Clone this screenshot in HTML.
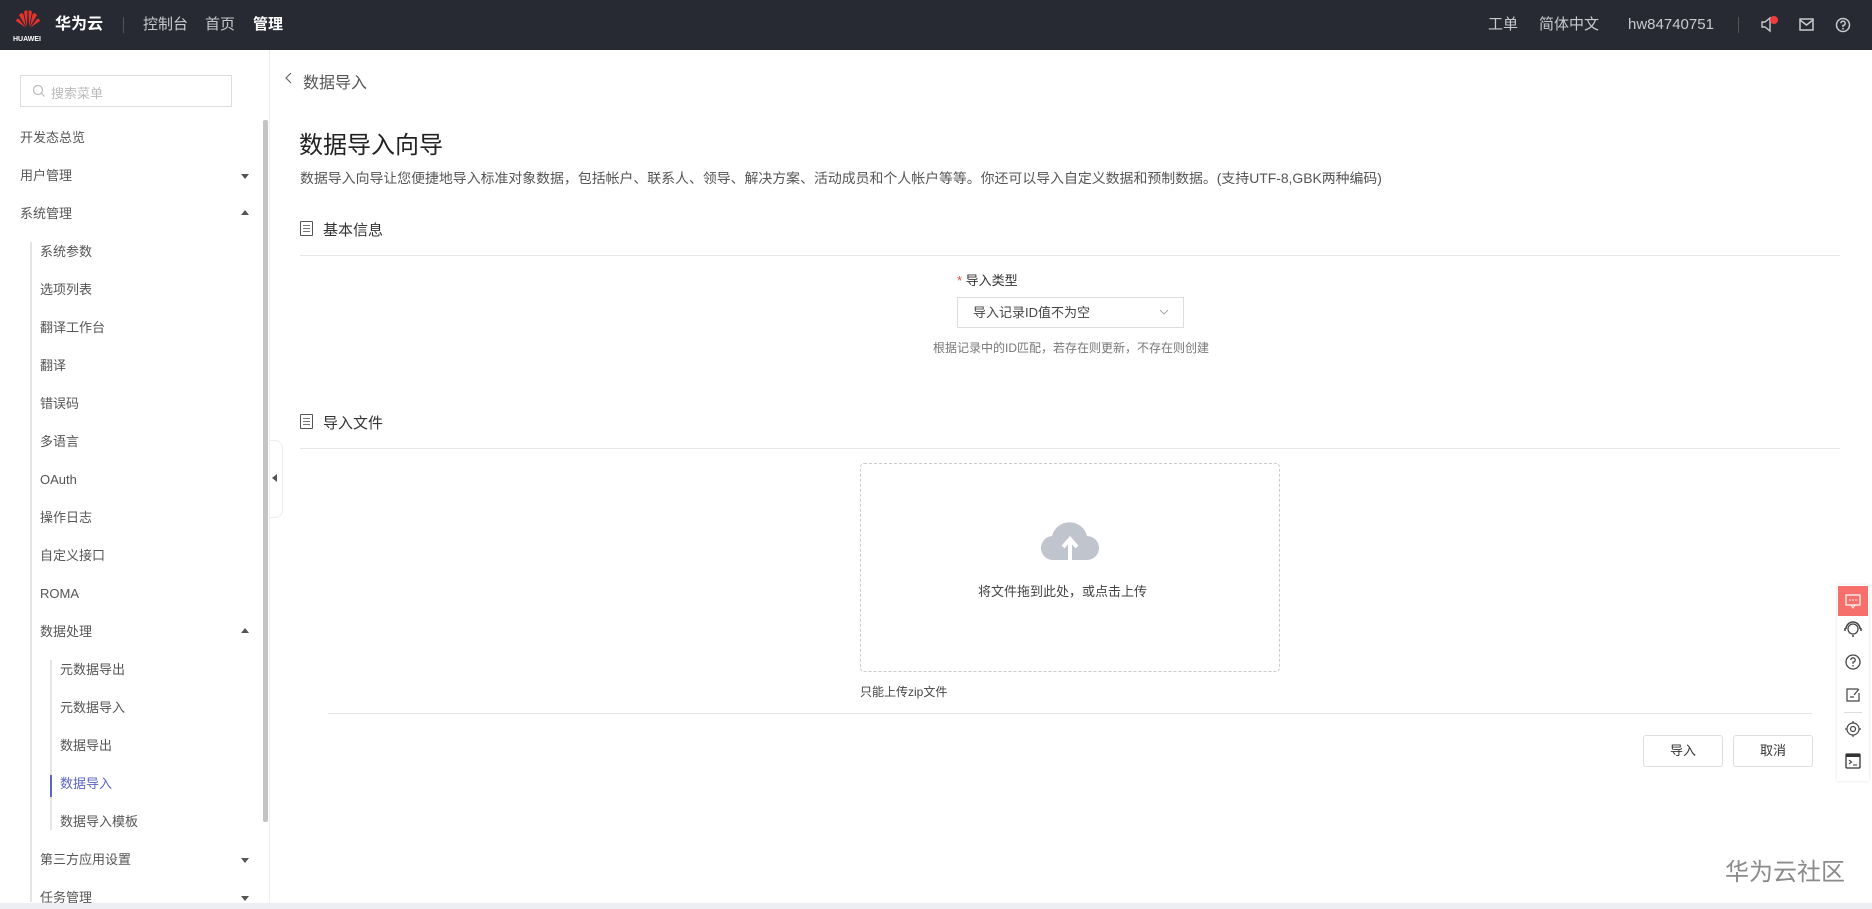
<!DOCTYPE html>
<html><head><meta charset="utf-8">
<style>
*{margin:0;padding:0;box-sizing:border-box}
body{width:1872px;height:909px;overflow:hidden;background:#fff;font-family:"Liberation Sans","Noto Sans CJK SC",sans-serif;color:#333;position:relative}
.hd{position:absolute;left:0;top:0;width:1872px;height:50px;background:#272a33;color:#c8cad0;font-size:15px}
.hd span{position:absolute;top:15px;line-height:20px}
.sb{position:absolute;left:0;top:50px;width:270px;height:853px;border-right:1px solid #eee}
.s{position:absolute;font-size:13px;color:#555;line-height:18px}
.tri{position:absolute;left:241px;width:0;height:0;border-left:4px solid transparent;border-right:4px solid transparent}
.dn{border-top:5px solid #555}.up{border-bottom:5px solid #555}
.m{position:absolute}
.ln{position:absolute;height:1px;background:#e6e6e6}
.ic{position:absolute;width:13px;height:15px;border:1px solid #555;border-radius:1px}
.ic i{position:absolute;left:2px;width:7px;height:1px;background:#777}
.btn{position:absolute;top:735px;width:80px;height:32px;border:1px solid #ddd;border-radius:3px;font-size:13px;text-align:center;line-height:30px;color:#333}
.fb{position:absolute;left:1838px;width:30px;height:30px}
</style></head><body>
<div class="hd">
  <svg style="position:absolute;left:15px;top:9px" width="26" height="20" viewBox="0 0 26 20">
    <g fill="#e8302c"><path d="M12 18 L9 3 Q11 0 12.5 2Z"/><path d="M14 18 L17 3 Q15 0 13.5 2Z"/><path d="M11 18 L4 6 Q6 3 8.5 5Z"/><path d="M15 18 L22 6 Q20 3 17.5 5Z"/><path d="M10.5 18.5 L1 12 Q1.5 9 4 10Z"/><path d="M15.5 18.5 L25 12 Q24.5 9 22 10Z"/></g>
  </svg>
  <span style="left:13px;top:30px;font-size:7px;color:#fff;font-weight:bold">HUAWEI</span>
  <span style="left:55px;color:#fff;font-weight:bold;font-size:16px">华为云</span>
  <div style="position:absolute;left:123px;top:17px;width:1px;height:16px;background:#555"></div>
  <span style="left:143px">控制台</span>
  <span style="left:205px">首页</span>
  <span style="left:253px;color:#fff;font-weight:bold">管理</span>
  <span style="left:1488px">工单</span>
  <span style="left:1539px">简体中文</span>
  <span style="left:1628px">hw84740751</span>
  <div style="position:absolute;left:1738px;top:17px;width:1px;height:16px;background:#555"></div>
  <svg style="position:absolute;left:1760px;top:16px" width="22" height="18" viewBox="0 0 22 18"><path d="M2 6h3l5-4v13l-5-4H2z" fill="none" stroke="#c8cad0" stroke-width="1.4"/><circle cx="14" cy="4" r="4" fill="#f03c3c"/></svg>
  <svg style="position:absolute;left:1799px;top:18px" width="15" height="13" viewBox="0 0 15 13"><rect x="1" y="1" width="13" height="11" fill="none" stroke="#c8cad0" stroke-width="1.5"/><path d="M1 2l6.5 5L14 2" fill="none" stroke="#c8cad0" stroke-width="1.5"/></svg>
  <svg style="position:absolute;left:1835px;top:17px" width="16" height="16" viewBox="0 0 16 16"><circle cx="8" cy="8" r="6.5" fill="none" stroke="#c8cad0" stroke-width="1.5"/><path d="M5.8 6.3a2.2 2.2 0 1 1 2.2 2.2v1.5" fill="none" stroke="#c8cad0" stroke-width="1.5"/><circle cx="8" cy="11.8" r=".9" fill="#c8cad0"/></svg>
</div>

<div class="sb">
  <div style="position:absolute;left:20px;top:25px;width:212px;height:32px;border:1px solid #ddd">
    <svg style="position:absolute;left:11px;top:8px" width="14" height="14" viewBox="0 0 14 14"><circle cx="6" cy="6" r="4.5" fill="none" stroke="#bbb" stroke-width="1.2"/><path d="M9.5 9.5l3 3" stroke="#bbb" stroke-width="1.2"/></svg>
    <span style="position:absolute;left:30px;top:7px;font-size:13px;color:#bbb">搜索菜单</span>
  </div>
  <div style="position:absolute;left:263px;top:70px;width:5px;height:702px;background:#c4c4c4;border-radius:2px"></div>
  <div style="position:absolute;left:30px;top:192px;width:2px;height:660px;background:#e5e5e5"></div>
  <div style="position:absolute;left:50px;top:610px;width:2px;height:170px;background:#e5e5e5"></div>
  <div style="position:absolute;left:50px;top:725px;width:2px;height:22px;background:#5c64c4"></div>
  <div class="s" style="left:20px;top:79px">开发态总览</div>
  <div class="s" style="left:20px;top:117px">用户管理</div><div class="tri dn" style="top:124px"></div>
  <div class="s" style="left:20px;top:155px">系统管理</div><div class="tri up" style="top:160px"></div>
  <div class="s" style="left:40px;top:193px">系统参数</div>
  <div class="s" style="left:40px;top:231px">选项列表</div>
  <div class="s" style="left:40px;top:269px">翻译工作台</div>
  <div class="s" style="left:40px;top:307px">翻译</div>
  <div class="s" style="left:40px;top:345px">错误码</div>
  <div class="s" style="left:40px;top:383px">多语言</div>
  <div class="s" style="left:40px;top:421px">OAuth</div>
  <div class="s" style="left:40px;top:459px">操作日志</div>
  <div class="s" style="left:40px;top:497px">自定义接口</div>
  <div class="s" style="left:40px;top:535px">ROMA</div>
  <div class="s" style="left:40px;top:573px">数据处理</div><div class="tri up" style="top:578px"></div>
  <div class="s" style="left:60px;top:611px">元数据导出</div>
  <div class="s" style="left:60px;top:649px">元数据导入</div>
  <div class="s" style="left:60px;top:687px">数据导出</div>
  <div class="s" style="left:60px;top:725px;color:#5c64c4">数据导入</div>
  <div class="s" style="left:60px;top:763px">数据导入模板</div>
  <div class="s" style="left:40px;top:801px">第三方应用设置</div><div class="tri dn" style="top:808px"></div>
  <div class="s" style="left:40px;top:839px">任务管理</div><div class="tri dn" style="top:846px"></div>
</div>
<div style="position:absolute;left:270px;top:440px;width:13px;height:78px;background:#fff;border:1px solid #eee;border-left:none;border-radius:0 8px 8px 0"></div>
<div style="position:absolute;left:272px;top:474px;width:0;height:0;border-top:4px solid transparent;border-bottom:4px solid transparent;border-right:5px solid #555"></div>
<div style="position:absolute;left:0;top:903px;width:1872px;height:6px;background:#eceef4"></div>

<svg class="m" style="left:284px;top:71px" width="10" height="14" viewBox="0 0 10 14"><path d="M7 2L2 7l5 5" fill="none" stroke="#666" stroke-width="1.2"/></svg>
<div class="m" style="left:303px;top:69px;font-size:16px;color:#555">数据导入</div>
<div class="m" style="left:299px;top:125px;font-size:24px;color:#222">数据导入向导</div>
<div class="m" style="left:300px;top:168px;font-size:13.9px;color:#555">数据导入向导让您便捷地导入标准对象数据，包括帐户、联系人、领导、解决方案、活动成员和个人帐户等等。你还可以导入自定义数据和预制数据。(支持UTF-8,GBK两种编码)</div>

<div class="ic" style="left:300px;top:221px"><i style="top:3px"></i><i style="top:6px"></i><i style="top:9px"></i></div>
<div class="m" style="left:323px;top:219px;font-size:15px;color:#333">基本信息</div>
<div class="ln" style="left:300px;top:255px;width:1540px"></div>
<div class="m" style="left:957px;top:270px;font-size:13px;color:#333"><span style="color:#e84a4a">* </span>导入类型</div>
<div class="m" style="left:957px;top:297px;width:227px;height:31px;border:1px solid #ddd;font-size:13px;color:#444;line-height:29px;padding-left:15px">导入记录ID值不为空
<svg style="position:absolute;right:14px;top:11px" width="10" height="7" viewBox="0 0 10 7"><path d="M1 1l4 4 4-4" fill="none" stroke="#aaa" stroke-width="1"/></svg></div>
<div class="m" style="left:933px;top:339px;font-size:12px;color:#777">根据记录中的ID匹配，若存在则更新，不存在则创建</div>

<div class="ic" style="left:300px;top:414px"><i style="top:3px"></i><i style="top:6px"></i><i style="top:9px"></i></div>
<div class="m" style="left:323px;top:412px;font-size:15px;color:#333">导入文件</div>
<div class="ln" style="left:300px;top:448px;width:1540px"></div>
<div class="m" style="left:860px;top:463px;width:420px;height:209px;border:1px dashed #ccc;border-radius:4px"></div>
<svg class="m" style="left:1040px;top:518px" width="60" height="44" viewBox="0 0 60 44"><path d="M14 42a12 12 0 0 1-2-24 18 18 0 0 1 35 0 12 12 0 0 1 0 24z" fill="#c0c4cc"/><path d="M30 42V22M23 29l7-8 7 8" fill="none" stroke="#fff" stroke-width="4"/></svg>
<div class="m" style="left:978px;top:581px;font-size:13px;color:#444">将文件拖到此处，或点击上传</div>
<div class="m" style="left:860px;top:683px;font-size:12px;color:#444">只能上传zip文件</div>
<div class="ln" style="left:328px;top:713px;width:1484px"></div>
<div class="btn" style="left:1643px">导入</div>
<div class="btn" style="left:1733px">取消</div>

<div style="position:absolute;left:1837px;top:585px;width:32px;height:196px;background:#fff;box-shadow:0 0 3px rgba(0,0,0,.12)"></div>
<div class="fb" style="top:586px;background:#f66f6a"><svg width="30" height="30" viewBox="0 0 30 30"><rect x="8" y="9" width="14" height="10" fill="none" stroke="#fff" stroke-width="1.2"/><path d="M13 19l2 3 2-3" fill="none" stroke="#fff"/><circle cx="12" cy="14" r=".8" fill="#fff"/><circle cx="15" cy="14" r=".8" fill="#fff"/><circle cx="18" cy="14" r=".8" fill="#fff"/></svg></div>
<div class="fb" style="top:615px"><svg width="30" height="30" viewBox="0 0 30 30"><circle cx="15" cy="14" r="5" fill="none" stroke="#444" stroke-width="1.3"/><path d="M8 14a7 7 0 0 1 14 0M7 13v3M23 13v3M15 20v2" fill="none" stroke="#444" stroke-width="1.5"/></svg></div>
<div class="fb" style="top:647px"><svg width="30" height="30" viewBox="0 0 30 30"><circle cx="15" cy="15" r="7" fill="none" stroke="#444" stroke-width="1.3"/><path d="M12.8 13a2.2 2.2 0 1 1 2.2 2.2v1.5" fill="none" stroke="#444" stroke-width="1.3"/><circle cx="15" cy="18.8" r=".8" fill="#444"/></svg></div>
<div class="fb" style="top:679px"><svg width="30" height="30" viewBox="0 0 30 30"><path d="M20 10h-11v12h12v-8" fill="none" stroke="#444" stroke-width="1.2"/><path d="M16 16l5-6M12 18h4" stroke="#444" stroke-width="1.2"/></svg></div>
<div style="position:absolute;left:1844px;top:712px;width:18px;height:1px;background:#ddd"></div>
<div class="fb" style="top:714px"><svg width="30" height="30" viewBox="0 0 30 30"><circle cx="15" cy="15" r="6" fill="none" stroke="#444" stroke-width="1.2"/><circle cx="15" cy="15" r="2.5" fill="none" stroke="#444" stroke-width="1.2"/><path d="M15 7v2M15 21v2M7 15h2M21 15h2" stroke="#444" stroke-width="1.2"/></svg></div>
<div class="fb" style="top:746px"><svg width="30" height="30" viewBox="0 0 30 30"><rect x="8" y="8" width="14" height="14" rx="1" fill="none" stroke="#333" stroke-width="1.3"/><rect x="8" y="8" width="14" height="3" fill="#333"/><path d="M11 14l2.5 2-2.5 2M15 19h4" fill="none" stroke="#333" stroke-width="1.1"/></svg></div>

<div class="m" style="left:1725px;top:852px;font-size:24px;color:#8a8a8a">华为云社区</div>
</body></html>
